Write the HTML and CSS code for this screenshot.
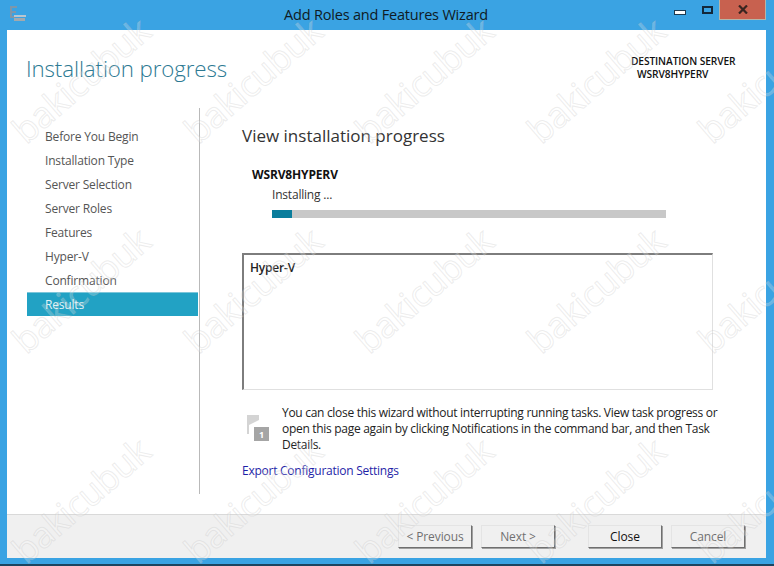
FILE: index.html
```html
<!DOCTYPE html>
<html lang="en">
<head>
<meta charset="utf-8">
<title>Add Roles and Features Wizard</title>
<link rel="stylesheet" href="styles.css">
</head>
<body>
<div class="window">
  <header class="titlebar">
    <svg class="app-icon" width="18" height="16" viewBox="0 0 18 16">
      <path d="M1 0h7v2H3v3h4v2H3v3h3v2H1z" fill="#7d97ab"/>
      <rect x="5" y="9" width="12" height="2" fill="#b9c6d0"/>
      <rect x="5" y="12" width="11" height="3" fill="#a3a9ad"/>
    </svg>
    <div class="title">Add Roles and Features Wizard</div>
    <div class="controls">
      <span class="ctl-min"></span>
      <span class="ctl-max"></span>
      <span class="ctl-close">
        <svg width="10" height="9" viewBox="0 0 10 9"><path d="M1 0.5l8 8M9 0.5l-8 8" stroke="#3a2520" stroke-width="2.2" fill="none"/></svg>
      </span>
    </div>
  </header>
  <div class="client">
    <div class="head">
      <h1 class="page-title">Installation progress</h1>
      <div class="dest">
        <div>DESTINATION SERVER</div>
        <div class="dest-name">WSRV8HYPERV</div>
      </div>
    </div>
    <div class="body">
      <nav class="nav">
        <div class="nav-item">Before You Begin</div>
        <div class="nav-item">Installation Type</div>
        <div class="nav-item">Server Selection</div>
        <div class="nav-item">Server Roles</div>
        <div class="nav-item">Features</div>
        <div class="nav-item">Hyper-V</div>
        <div class="nav-item">Confirmation</div>
        <div class="nav-item active">Results</div>
      </nav>
      <main class="main">
        <h2 class="heading">View installation progress</h2>
        <div class="server">WSRV8HYPERV</div>
        <div class="status">Installing ...</div>
        <div class="bar"><div class="fill"></div></div>
        <div class="box"><span class="box-item">Hyper-V</span></div>
        <div class="note">
          <svg class="flag" width="24" height="28" viewBox="0 0 24 28">
            <path d="M1 1v19h2v-9l10-5V1z" fill="#d4d4d4"/>
            <rect x="8" y="13" width="15" height="14" fill="#a5a5a5"/>
            <text x="15.5" y="24" text-anchor="middle" class="flag-num">1</text>
          </svg>
          <p class="note-text">You can close this wizard without interrupting running tasks. View task progress or open this page again by clicking Notifications in the command bar, and then Task Details.</p>
        </div>
        <a class="link" href="#">Export Configuration Settings</a>
      </main>
    </div>
    <footer class="footer">
      <button class="btn off">&lt; Previous</button>
      <button class="btn off">Next &gt;</button>
      <button class="btn sep">Close</button>
      <button class="btn off">Cancel</button>
    </footer>
  </div>
  <div class="marks" aria-hidden="true">
    <span>bakicubuk</span><span>bakicubuk</span><span>bakicubuk</span><span>bakicubuk</span><span>bakicubuk</span>
    <span>bakicubuk</span><span>bakicubuk</span><span>bakicubuk</span><span>bakicubuk</span><span>bakicubuk</span>
    <span>bakicubuk</span><span>bakicubuk</span><span>bakicubuk</span><span>bakicubuk</span><span>bakicubuk</span>
  </div>
</div>
</body>
</html>
```
FILE: styles.css
```css
* { box-sizing: border-box; }
html, body { margin: 0; padding: 0; }
body { font-family: "Open Sans", "Noto Sans", sans-serif; font-size: 12px; color: #222; overflow: hidden; }
.window { position: relative; width: 774px; height: 566px; background: #3aa3e3; border-bottom: 2px solid #1c4560; display: flex; flex-direction: column; overflow: hidden; }
.titlebar { height: 30px; flex: none; display: flex; position: relative; }
.app-icon { position: absolute; left: 9px; top: 6px; }
.title { flex: 1; text-align: center; font-size: 14.5px; line-height: 30px; color: #0f1a24; padding-right: 2px; letter-spacing: -0.2px; }
.controls { position: absolute; right: 8px; top: 0; display: flex; align-items: flex-start; }
.ctl-min { width: 12px; height: 5px; margin: 10px 16px 0 0; background: #fff; border: 1px solid #1d3a50; }
.ctl-max { width: 11px; height: 8px; margin: 6px 6px 0 0; border: 2px solid #13283a; }
.ctl-close { width: 47px; height: 20px; background: #c8614f; display: flex; align-items: center; justify-content: center; border: 1px solid #b5b5a8; border-top: 0; }
.client { flex: 1; margin: 0 8px 6px 7px; background: #fff; display: flex; flex-direction: column; min-height: 0; }
.head { height: 78px; flex: none; display: flex; justify-content: space-between; padding: 0 30px 0 19px; }
.page-title { margin: 23px 0 0; font-size: 22.3px; line-height: 32px; font-weight: 300; color: #2d7a93; letter-spacing: -0.1px; }
.dest { margin-top: 25px; width: 105px; font-size: 10.2px; line-height: 13px; font-weight: 600; color: #111; white-space: nowrap; letter-spacing: -0.1px; }
.dest-name { padding-left: 6px; }
.body { flex: 1; display: flex; min-height: 0; }
.nav { width: 193px; flex: none; padding: 16px 0 0 20px; border-right: 1px solid #b9b9b9; margin-right: 42px; }
.nav-item { width: 171px; height: 24px; line-height: 26px; padding-left: 18px; color: #555; font-size: 12px; letter-spacing: -0.18px; }
.nav-item.active { background: #22a2c4; border-top: 1px solid #7cc6da; line-height: 24px; color: #e4f3f7; }
.main { width: 471px; flex: none; display: flex; flex-direction: column; }
.heading { margin: 15px 0 0; font-size: 17px; line-height: 26px; font-weight: 400; color: #333; letter-spacing: 0; }
.server { margin: 17px 0 0 10px; line-height: 18px; font-weight: 700; color: #111; letter-spacing: -0.15px; }
.status { margin: 3px 0 0 30px; line-height: 16px; color: #333; letter-spacing: -0.2px; }
.bar { margin: 7px 0 0 30px; width: 394px; height: 8px; background: #c8c8c8; }
.fill { width: 20px; height: 100%; background: #0a7d9c; }
.box { margin-top: 35px; height: 137px; padding: 4px 6px; border: 1px solid #e0e0e0; border-top: 2px solid #7d7d7d; border-left: 2px solid #7d7d7d; }
.box-item { font-weight: 600; line-height: 18px; color: #222; letter-spacing: -0.2px; }
.note { margin: 15px -6px 0 0; display: flex; align-items: flex-start; }
.flag { flex: none; margin: 9px 0 0 4px; }
.flag-num { font-size: 9px; font-weight: 700; fill: #fff; }
.note-text { margin: 0 0 0 12px; line-height: 16px; color: #222; letter-spacing: -0.3px; }
.link { margin-top: 10px; line-height: 16px; color: #1f1fa8; text-decoration: none; letter-spacing: -0.25px; }
.footer { margin-top: 20px; height: 44px; flex: none; background: #f0f0f0; border-top: 1px solid #d9d9d9; display: flex; gap: 9px; padding: 10px 21px 0 0; justify-content: flex-end; }
.btn { width: 74px; height: 23px; padding: 0; background: #f0f0f0; border: 1px solid; border-color: #e4e4e4 #6f6f6f #6f6f6f #e4e4e4; box-shadow: 1px 1px 0 #a0a0a0; font: inherit; letter-spacing: -0.1px; color: #111; }
.btn.off { color: #707070; }
.btn.sep { margin-left: 24px; }
.marks { position: absolute; left: 0; top: 0; width: 860px; height: 630px; display: grid; grid-template-columns: repeat(5, 171.5px); grid-auto-rows: 210px; pointer-events: none; }
.marks span { display: block; width: 200px; margin: 45px 0 0 22px; transform: rotate(-41deg); font-family: "Open Sans", sans-serif; font-size: 36px; line-height: 40px; font-weight: 400; color: rgba(255,255,255,0.22); -webkit-text-stroke: 1px rgba(190,190,190,0.28); letter-spacing: -0.5px; text-align: center; }
```
